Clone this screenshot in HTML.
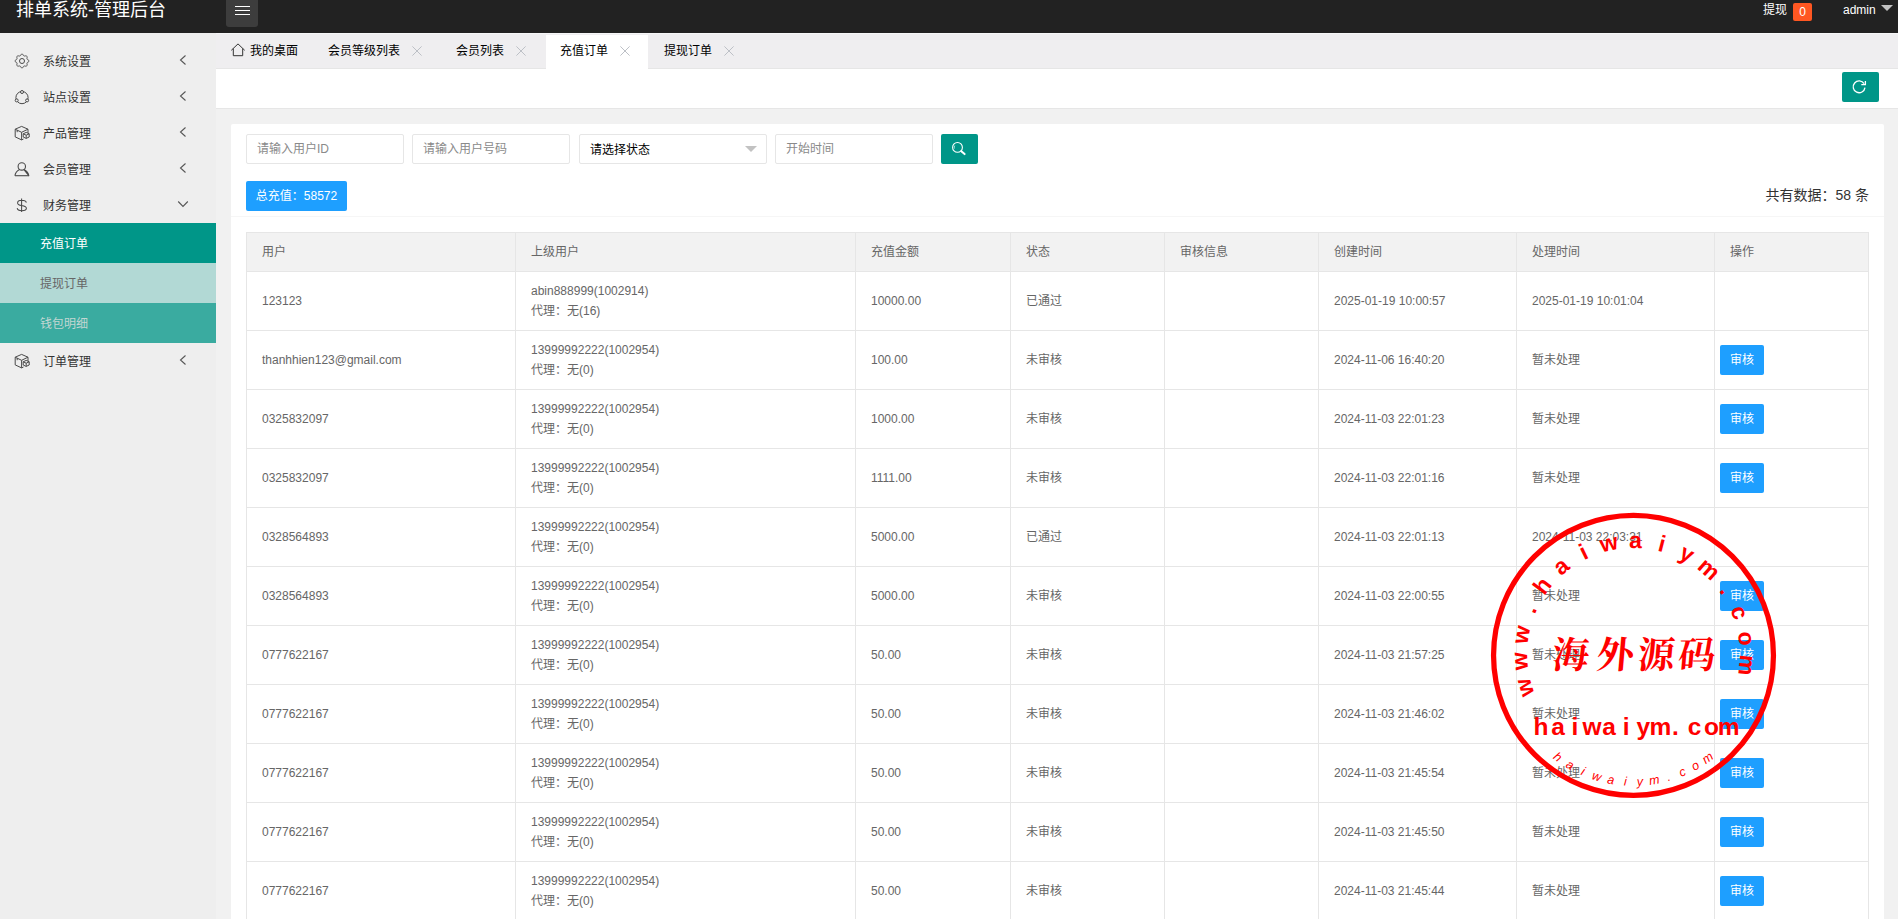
<!DOCTYPE html>
<html lang="zh-CN">
<head>
<meta charset="utf-8">
<title>排单系统-管理后台</title>
<style>
*{box-sizing:border-box;margin:0;padding:0}
html,body{width:1898px;height:919px;overflow:hidden}
body{font-family:"Liberation Sans","Noto Sans CJK SC",sans-serif;font-size:12px;color:#666;background:#f1f1f1;position:relative}
a{text-decoration:none;color:inherit}
ul{list-style:none}
/* header */
.hd{position:absolute;left:0;top:0;width:1898px;height:33px;background:#222;color:#fff;overflow:hidden}
.logo{position:absolute;left:16px;top:-3px;font-size:18px;line-height:26px;color:#fff;white-space:nowrap}
.tog{position:absolute;left:226px;top:-4px;width:32px;height:31px;background:#3d3d3d;border-radius:3px}
.tog i{position:absolute;left:8.500px;width:15px;height:1.300px;background:#fff}
.hr1{position:absolute;left:1763px;top:0;font-size:12px;line-height:20px;color:#fff}
.bdg{position:absolute;left:1793px;top:3px;width:19px;height:18px;background:#ff5722;border-radius:2px;color:#fff;font-size:12px;line-height:18px;text-align:center}
.adm{position:absolute;left:1843px;top:0;font-size:12px;line-height:20px;color:#fff}
.car{position:absolute;left:1881px;top:5px;width:0;height:0;border:6px solid transparent;border-top-color:#c2c2c2;border-bottom-width:0}
/* sidebar */
.sb{position:absolute;left:0;top:33px;width:216px;height:886px;background:#eee}
.mi{position:absolute;left:0;width:216px;height:36px}
.mi .tx{position:absolute;left:43px;top:0;line-height:36px;font-size:12px;color:#333}
.mi svg.ic{position:absolute;left:14px;top:8.600px;width:16px;height:16px}
.mi svg.ar{position:absolute;left:177px;top:10px;width:12px;height:12px}
.sub{position:absolute;left:0;width:216px;height:40px;line-height:42px;padding-left:40px;font-size:12px}
/* tabs */
.tabs{position:absolute;left:216px;top:33px;width:1682px;height:36px;background:#efeef0;box-shadow:inset 0 1px 0 #f6f6f7;border-bottom:1px solid #e6e6e6}
.tab{position:absolute;top:1px;height:35px;line-height:35px;font-size:12px;color:#000;white-space:nowrap}
.tab.on{background:linear-gradient(to bottom,rgba(255,255,255,0) 1px,#fff 1px);height:36px}
.tab svg.x{position:absolute;top:12px;width:10px;height:10px}
/* toolbar */
.tb{position:absolute;left:216px;top:69px;width:1682px;height:40px;background:#fff;border-bottom:1px solid #e6e6e6}
.rf{position:absolute;left:1626px;top:3px;width:37px;height:30px;background:#009688;border-radius:2px}
/* card */
.card{position:absolute;left:231px;top:124px;width:1653px;height:800px;background:#fff;border-radius:2px}
.inp{position:absolute;top:10px;height:30px;border:1px solid #e6e6e6;border-radius:2px;background:#fff;line-height:28px;padding-left:10px;font-size:12px;color:#8a8a8a;white-space:nowrap}
.sel{color:#000;line-height:31px}
.sbtn{position:absolute;left:710px;top:10px;width:37px;height:30px;background:#009688;border-radius:2px}
.tot{position:absolute;left:15px;top:57px;width:101px;height:30px;background:#1e9fff;color:#fff;border-radius:2px;line-height:31px;text-align:center;font-size:12px;white-space:nowrap}
.cnt{position:absolute;right:15px;top:61px;font-size:14px;line-height:20px;color:#333;white-space:nowrap}
.ln{position:absolute;left:0;top:92px;width:1653px;height:1px;background:#f6f6f6}
table{position:absolute;left:15px;top:108px;width:1622px;border-collapse:collapse;table-layout:fixed;font-size:12px;color:#666}
th,td{border:1px solid #e6e6e6;padding:9px 15px;line-height:20px;text-align:left;font-weight:400;white-space:nowrap;overflow:hidden}
th{background:#f2f2f2}
td.op{padding:9px 5px}
.btn{display:inline-block;width:44px;height:30px;line-height:30px;background:#1e9fff;color:#fff;border-radius:2px;text-align:center;font-size:12px;vertical-align:middle}
.stamp{position:absolute;left:1483px;top:504px;width:300px;height:300px}
.dn{position:absolute;right:9px;top:11.300px;width:0;height:0;border:6px solid transparent;border-top-color:#c2c2c2;border-bottom-width:0}
</style>
</head>
<body>
<div class="hd">
  <div class="logo">排单系统-管理后台</div>
  <div class="tog"><i style="top:10.200px"></i><i style="top:14.200px"></i><i style="top:18.100px"></i></div>
  <div class="hr1">提现</div><div class="bdg">0</div>
  <div class="adm">admin</div><div class="car"></div>
</div>
<div class="sb">
<div class="mi" style="top:11px"><svg class="ic" viewBox="0 0 16 16"><path d="M8.00 1.25 L8.22 1.26 L8.44 1.28 L8.66 1.32 L8.87 1.41 L9.05 1.62 L9.20 1.97 L9.32 2.32 L9.46 2.54 L9.62 2.65 L9.79 2.73 L9.96 2.80 L10.12 2.87 L10.29 2.94 L10.46 3.01 L10.63 3.07 L10.83 3.10 L11.08 3.05 L11.42 2.89 L11.77 2.74 L12.04 2.73 L12.26 2.81 L12.44 2.93 L12.61 3.08 L12.77 3.23 L12.92 3.39 L13.07 3.56 L13.19 3.74 L13.27 3.96 L13.26 4.23 L13.11 4.58 L12.95 4.92 L12.90 5.17 L12.93 5.37 L12.99 5.54 L13.06 5.71 L13.13 5.88 L13.20 6.04 L13.27 6.21 L13.35 6.38 L13.46 6.54 L13.68 6.68 L14.03 6.80 L14.38 6.95 L14.59 7.13 L14.68 7.34 L14.72 7.56 L14.74 7.78 L14.75 8.00 L14.74 8.22 L14.72 8.44 L14.68 8.66 L14.59 8.87 L14.38 9.05 L14.03 9.20 L13.68 9.32 L13.46 9.46 L13.35 9.62 L13.27 9.79 L13.20 9.96 L13.13 10.12 L13.06 10.29 L12.99 10.46 L12.93 10.63 L12.90 10.83 L12.95 11.08 L13.11 11.42 L13.26 11.77 L13.27 12.04 L13.19 12.26 L13.07 12.44 L12.92 12.61 L12.77 12.77 L12.61 12.92 L12.44 13.07 L12.26 13.19 L12.04 13.27 L11.77 13.26 L11.42 13.11 L11.08 12.95 L10.83 12.90 L10.63 12.93 L10.46 12.99 L10.29 13.06 L10.12 13.13 L9.96 13.20 L9.79 13.27 L9.62 13.35 L9.46 13.46 L9.32 13.68 L9.20 14.03 L9.05 14.38 L8.87 14.59 L8.66 14.68 L8.44 14.72 L8.22 14.74 L8.00 14.75 L7.78 14.74 L7.56 14.72 L7.34 14.68 L7.13 14.59 L6.95 14.38 L6.80 14.03 L6.68 13.68 L6.54 13.46 L6.38 13.35 L6.21 13.27 L6.04 13.20 L5.88 13.13 L5.71 13.06 L5.54 12.99 L5.37 12.93 L5.17 12.90 L4.92 12.95 L4.58 13.11 L4.23 13.26 L3.96 13.27 L3.74 13.19 L3.56 13.07 L3.39 12.92 L3.23 12.77 L3.08 12.61 L2.93 12.44 L2.81 12.26 L2.73 12.04 L2.74 11.77 L2.89 11.42 L3.05 11.08 L3.10 10.83 L3.07 10.63 L3.01 10.46 L2.94 10.29 L2.87 10.12 L2.80 9.96 L2.73 9.79 L2.65 9.62 L2.54 9.46 L2.32 9.32 L1.97 9.20 L1.62 9.05 L1.41 8.87 L1.32 8.66 L1.28 8.44 L1.26 8.22 L1.25 8.00 L1.26 7.78 L1.28 7.56 L1.32 7.34 L1.41 7.13 L1.62 6.95 L1.97 6.80 L2.32 6.68 L2.54 6.54 L2.65 6.38 L2.73 6.21 L2.80 6.04 L2.87 5.88 L2.94 5.71 L3.01 5.54 L3.07 5.37 L3.10 5.17 L3.05 4.92 L2.89 4.58 L2.74 4.23 L2.73 3.96 L2.81 3.74 L2.93 3.56 L3.08 3.39 L3.23 3.23 L3.39 3.08 L3.56 2.93 L3.74 2.81 L3.96 2.73 L4.23 2.74 L4.58 2.89 L4.92 3.05 L5.17 3.10 L5.37 3.07 L5.54 3.01 L5.71 2.94 L5.88 2.87 L6.04 2.80 L6.21 2.73 L6.38 2.65 L6.54 2.54 L6.68 2.32 L6.80 1.97 L6.95 1.62 L7.13 1.41 L7.34 1.32 L7.56 1.28 L7.78 1.26 Z" fill="none" stroke="#4a4a4a" stroke-width="1" stroke-linejoin="round"/><circle cx="8" cy="8" r="2.500" fill="none" stroke="#4a4a4a" stroke-width="1"/></svg><span class="tx">系统设置</span><svg class="ar" viewBox="0 0 12 12"><path d="M8.5 1.5 L3.5 6 L8.5 10.5" fill="none" stroke="#555" stroke-width="1.1"/></svg></div>
<div class="mi" style="top:47px"><svg class="ic" viewBox="0 0 16 16"><circle cx="8" cy="8.600" r="6.100" fill="none" stroke="#4a4a4a" stroke-width="1"/><circle cx="8" cy="3" r="1.500" fill="#eee" stroke="#4a4a4a" stroke-width="1"/><circle cx="2.700" cy="11.400" r="1.500" fill="#eee" stroke="#4a4a4a" stroke-width="1"/><circle cx="13.100" cy="11.400" r="1.500" fill="#eee" stroke="#4a4a4a" stroke-width="1"/></svg><span class="tx">站点设置</span><svg class="ar" viewBox="0 0 12 12"><path d="M8.5 1.5 L3.5 6 L8.5 10.5" fill="none" stroke="#555" stroke-width="1.1"/></svg></div>
<div class="mi" style="top:83px"><svg class="ic" viewBox="0 0 16 16"><path d="M7.600 1.400 L14 4.200 V8 M9.500 14 L7.600 14.900 L1.200 11.900 V4.200 L7.600 1.400 M1.200 4.200 L7.600 7.300 L14 4.200 M7.600 7.300 V14.900 M3.200 5.200 V7.200" fill="none" stroke="#4a4a4a" stroke-width="1" stroke-linejoin="round"/><path d="M12.200 7.400 L15.200 8.800 V12 L12.200 13.400 L9.200 12 V8.800 Z M9.200 8.800 L12.200 10.200 L15.200 8.800 M12.200 10.200 V13.400" fill="#eee" stroke="#4a4a4a" stroke-width="1" stroke-linejoin="round"/></svg><span class="tx">产品管理</span><svg class="ar" viewBox="0 0 12 12"><path d="M8.5 1.5 L3.5 6 L8.5 10.5" fill="none" stroke="#555" stroke-width="1.1"/></svg></div>
<div class="mi" style="top:119px"><svg class="ic" viewBox="0 0 16 16"><circle cx="7.800" cy="5.400" r="3.700" fill="none" stroke="#4a4a4a" stroke-width="1.100"/><path d="M0.900 14.700 C1.500 11.200 3.600 9.600 5.600 8.600 M10 8.600 C12 9.600 14.200 11.200 14.800 14.700 Z" fill="none" stroke="#4a4a4a" stroke-width="1.100" stroke-linejoin="round"/><path d="M0.900 14.700 H14.800" stroke="#4a4a4a" stroke-width="1.100"/></svg><span class="tx">会员管理</span><svg class="ar" viewBox="0 0 12 12"><path d="M8.5 1.5 L3.5 6 L8.5 10.5" fill="none" stroke="#555" stroke-width="1.1"/></svg></div>
<div class="mi" style="top:155px"><svg class="ic" viewBox="0 0 16 16"><path d="M12.300 5.600 C12 3.900 10.300 3.300 7.700 3.300 C5.200 3.300 3.600 4.300 3.600 5.900 C3.600 7.600 5.300 8.100 7.700 8.500 C10.300 9 12.400 9.600 12.400 11.300 C12.400 12.900 10.500 13.700 7.800 13.700 C5.200 13.700 3.400 12.900 3.200 11.100 M7.600 1.400 V15" fill="none" stroke="#4a4a4a" stroke-width="1.050"/></svg><span class="tx">财务管理</span><svg class="ar" viewBox="0 0 12 12"><path d="M1.2 3.5 L6 8.5 L10.8 3.5" fill="none" stroke="#555" stroke-width="1.1"/></svg></div>
<div class="sub" style="top:190px;background:#009688;color:#fff">充值订单</div>
<div class="sub" style="top:230px;background:#b2d9d5;color:#666">提现订单</div>
<div class="sub" style="top:270px;background:#3aaba0;color:#c2d6d2">钱包明细</div>
<div class="mi" style="top:311px"><svg class="ic" viewBox="0 0 16 16"><path d="M7.600 1.400 L14 4.200 V8 M9.500 14 L7.600 14.900 L1.200 11.900 V4.200 L7.600 1.400 M1.200 4.200 L7.600 7.300 L14 4.200 M7.600 7.300 V14.900 M3.200 5.200 V7.200" fill="none" stroke="#4a4a4a" stroke-width="1" stroke-linejoin="round"/><path d="M12.200 7.400 L15.200 8.800 V12 L12.200 13.400 L9.200 12 V8.800 Z M9.200 8.800 L12.200 10.200 L15.200 8.800 M12.200 10.200 V13.400" fill="#eee" stroke="#4a4a4a" stroke-width="1" stroke-linejoin="round"/></svg><span class="tx">订单管理</span><svg class="ar" viewBox="0 0 12 12"><path d="M8.5 1.5 L3.5 6 L8.5 10.5" fill="none" stroke="#555" stroke-width="1.1"/></svg></div>
</div>
<div class="tabs">
<div class="tab" style="left:0;width:98px;padding-left:34px"><svg style="position:absolute;left:15px;top:9px;width:14px;height:14px;overflow:visible" viewBox="0 0 14 14"><path d="M0.300 7.300 L7 0.900 L13.700 7.300 M2.300 5.600 V12.700 H11.700 V5.600" fill="none" stroke="#333" stroke-width="1"/></svg>我的桌面</div>
<div class="tab" style="left:98px;width:128px;padding-left:14px">会员等级列表<svg class="x" style="left:98px" viewBox="0 0 10 10"><path d="M0.400 0.400 L9.600 9.600 M9.600 0.400 L0.400 9.600" fill="none" stroke="#bdc0c6" stroke-width="1"/></svg></div>
<div class="tab" style="left:226px;width:104px;padding-left:14px">会员列表<svg class="x" style="left:74px" viewBox="0 0 10 10"><path d="M0.400 0.400 L9.600 9.600 M9.600 0.400 L0.400 9.600" fill="none" stroke="#bdc0c6" stroke-width="1"/></svg></div>
<div class="tab on" style="left:330px;width:102px;padding-left:14px">充值订单<svg class="x" style="left:74px" viewBox="0 0 10 10"><path d="M0.400 0.400 L9.600 9.600 M9.600 0.400 L0.400 9.600" fill="none" stroke="#bdc0c6" stroke-width="1"/></svg></div>
<div class="tab" style="left:432px;width:104px;padding-left:16px">提现订单<svg class="x" style="left:76px" viewBox="0 0 10 10"><path d="M0.400 0.400 L9.600 9.600 M9.600 0.400 L0.400 9.600" fill="none" stroke="#bdc0c6" stroke-width="1"/></svg></div>
</div>
<div class="tb"><div class="rf"><svg style="position:absolute;left:0;top:0;width:37px;height:30px" viewBox="0 0 37 30"><path d="M22.100 11.700 A5.900 5.900 0 1 0 22.950 15.600" fill="none" stroke="#fff" stroke-width="1.300"/><path d="M23.400 8.900 V12.700 H19.300" fill="none" stroke="#fff" stroke-width="1.300"/></svg></div></div>
<div class="card">
<div class="inp" style="left:15px;width:158px">请输入用户ID</div>
<div class="inp" style="left:181px;width:158px">请输入用户号码</div>
<div class="inp sel" style="left:348px;width:188px">请选择状态<i class="dn"></i></div>
<div class="inp" style="left:544px;width:158px">开始时间</div>
<div class="sbtn"><svg style="position:absolute;left:0;top:0;width:37px;height:30px" viewBox="0 0 37 30"><circle cx="16.500" cy="13.400" r="4.900" fill="none" stroke="#fff" stroke-width="1.100"/><path d="M13.400 14.600 A3.300 3.300 0 0 1 13.800 11.600" fill="none" stroke="#fff" stroke-width=".8" opacity=".8"/><path d="M20.300 17.200 L23.600 20.100" stroke="#fff" stroke-width="2" stroke-linecap="round"/></svg></div>
<div class="tot">总充值：58572</div>
<div class="cnt">共有数据：58 条</div>
<div class="ln"></div>
<table><colgroup><col style="width:269px"><col style="width:340px"><col style="width:155px"><col style="width:154px"><col style="width:154px"><col style="width:198px"><col style="width:198px"><col style="width:154px"></colgroup>
<thead><tr><th>用户</th><th>上级用户</th><th>充值金额</th><th>状态</th><th>审核信息</th><th>创建时间</th><th>处理时间</th><th>操作</th></tr></thead>
<tbody>
<tr><td>123123</td><td>abin888999(1002914)<br>代理：无(16)</td><td>10000.00</td><td>已通过</td><td></td><td>2025-01-19 10:00:57</td><td>2025-01-19 10:01:04</td><td class="op"></td></tr>
<tr><td>thanhhien123@gmail.com</td><td>13999992222(1002954)<br>代理：无(0)</td><td>100.00</td><td>未审核</td><td></td><td>2024-11-06 16:40:20</td><td>暂未处理</td><td class="op"><a class="btn">审核</a></td></tr>
<tr><td>0325832097</td><td>13999992222(1002954)<br>代理：无(0)</td><td>1000.00</td><td>未审核</td><td></td><td>2024-11-03 22:01:23</td><td>暂未处理</td><td class="op"><a class="btn">审核</a></td></tr>
<tr><td>0325832097</td><td>13999992222(1002954)<br>代理：无(0)</td><td>1111.00</td><td>未审核</td><td></td><td>2024-11-03 22:01:16</td><td>暂未处理</td><td class="op"><a class="btn">审核</a></td></tr>
<tr><td>0328564893</td><td>13999992222(1002954)<br>代理：无(0)</td><td>5000.00</td><td>已通过</td><td></td><td>2024-11-03 22:01:13</td><td>2024-11-03 22:03:31</td><td class="op"></td></tr>
<tr><td>0328564893</td><td>13999992222(1002954)<br>代理：无(0)</td><td>5000.00</td><td>未审核</td><td></td><td>2024-11-03 22:00:55</td><td>暂未处理</td><td class="op"><a class="btn">审核</a></td></tr>
<tr><td>0777622167</td><td>13999992222(1002954)<br>代理：无(0)</td><td>50.00</td><td>未审核</td><td></td><td>2024-11-03 21:57:25</td><td>暂未处理</td><td class="op"><a class="btn">审核</a></td></tr>
<tr><td>0777622167</td><td>13999992222(1002954)<br>代理：无(0)</td><td>50.00</td><td>未审核</td><td></td><td>2024-11-03 21:46:02</td><td>暂未处理</td><td class="op"><a class="btn">审核</a></td></tr>
<tr><td>0777622167</td><td>13999992222(1002954)<br>代理：无(0)</td><td>50.00</td><td>未审核</td><td></td><td>2024-11-03 21:45:54</td><td>暂未处理</td><td class="op"><a class="btn">审核</a></td></tr>
<tr><td>0777622167</td><td>13999992222(1002954)<br>代理：无(0)</td><td>50.00</td><td>未审核</td><td></td><td>2024-11-03 21:45:50</td><td>暂未处理</td><td class="op"><a class="btn">审核</a></td></tr>
<tr><td>0777622167</td><td>13999992222(1002954)<br>代理：无(0)</td><td>50.00</td><td>未审核</td><td></td><td>2024-11-03 21:45:44</td><td>暂未处理</td><td class="op"><a class="btn">审核</a></td></tr>
</tbody></table>
</div>
<svg class="stamp" viewBox="0 0 300 300">
<circle cx="150.5" cy="151.4" r="139.95" fill="none" stroke="#f00" stroke-width="5.25"/>
<text x="51.46 44.94 44.26 51.74 61.38 77.95 101.03 118.76 145.96 174.02 194.76 213.28 235.74 247.06 254.79 257.29" y="189.93 165.72 140.65 110.84 91.94 72.34 56.16 48.46 43.90 46.59 53.44 63.91 86.71 105.39 128.55 150.31" rotate="253.00 266.50 280.00 293.50 307.00 320.50 334.00 347.50 1.00 14.50 28.00 41.50 55.00 68.50 82.00 95.50" font-family="Liberation Sans, sans-serif" font-weight="bold" font-size="23" fill="#f00">www.haiwaiym.com</text>
<text x="69.50 114.00 155.00 195.50" y="164.5" transform="matrix(1 0 -0.0875 1 13.17 0)" font-family="Noto Serif CJK SC, serif" font-weight="bold" font-size="37" fill="#f00">海外源码</text>
<text x="50.42 68.15 88.62 99.55 119.33 139.80 153.45 166.43 188.98 204.63 221.02 234.67" y="230.8" font-family="Liberation Sans, sans-serif" font-weight="bold" font-size="24.5" fill="#f00">haiwaiym.com</text>
<text x="69.61 81.97 97.15 108.22 123.73 140.68 153.97 166.89 185.02 197.98 211.36 222.86" y="254.16 262.70 270.61 275.00 279.20 281.54 281.89 280.98 277.30 273.07 267.03 260.34" rotate="36.40 29.86 23.31 16.77 10.22 3.68 -2.87 -9.41 -15.96 -22.50 -29.05 -35.59" font-family="Liberation Sans, sans-serif" font-style="italic" font-size="12.5" fill="#f00">haiwaiym.com</text>
</svg>

</body>
</html>
